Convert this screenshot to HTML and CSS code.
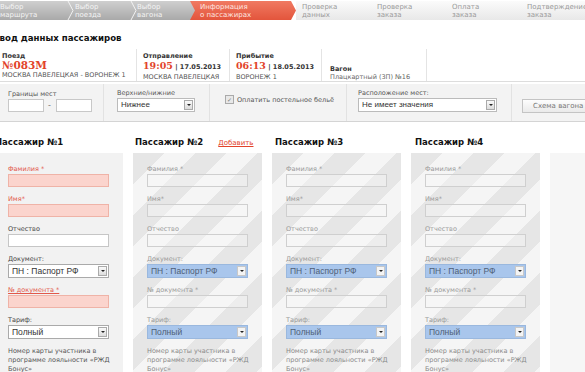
FILE: index.html
```html
<!DOCTYPE html>
<html lang="ru">
<head>
  <meta charset="UTF-8" />
  <title>Информация о пассажирах</title>
  <link rel="stylesheet" href="styles.css">
</head>
<body>
  <div class="steps">
    <div class="step done">Выбор<br>маршрута</div>
    <svg class="chev" width="7" height="19" viewBox="0 0 7 19"><polyline points="1,0 6,9.5 1,19" fill="none" stroke="#f2f2f2" stroke-width="1"/></svg>
    <div class="step done">Выбор<br>поезда</div>
    <svg class="chev" width="7" height="19" viewBox="0 0 7 19"><polyline points="1,0 6,9.5 1,19" fill="none" stroke="#f2f2f2" stroke-width="1"/></svg>
    <div class="step done">Выбор<br>вагона</div>
    <div class="step active">Информация<br>о пассажирах</div>
    <div class="step todo">Проверка<br>данных</div>
    <div class="step todo">Проверка<br>заказа</div>
    <div class="step todo">Оплата<br>заказа</div>
    <div class="step todo">Подтверждение<br>заказа</div>
  </div>

  <h1 class="title">Ввод данных пассажиров</h1>

  <div class="trip">
    <div class="trip-col c1">
      <div class="lbl">Поезд</div>
      <div class="big">№083М</div>
      <div class="sub">МОСКВА ПАВЕЛЕЦКАЯ - ВОРОНЕЖ 1</div>
    </div>
    <div class="trip-col c2">
      <div class="lbl">Отправление</div>
      <div class="time"><span class="red">19:05</span> | 17.05.2013</div>
      <div class="sub">МОСКВА ПАВЕЛЕЦКАЯ</div>
    </div>
    <div class="trip-col c3">
      <div class="lbl">Прибытие</div>
      <div class="time"><span class="red">06:13</span> | 18.05.2013</div>
      <div class="sub">ВОРОНЕЖ 1</div>
    </div>
    <div class="trip-col c4">
      <div class="lbl">Вагон</div>
      <div class="sub plain">Плацкартный (3П) №16</div>
    </div>
    <div class="trip-col c5"></div>
  </div>

  <div class="filters">
    <div class="fgroup g1">
      <div class="flabel">Границы мест</div>
      <div class="range"><input class="box" type="text"> <span class="dash">-</span> <input class="box" type="text"></div>
    </div>
    <div class="fgroup g2">
      <div class="flabel">Верхние/нижние</div>
      <div class="select w78">Нижнее<span class="arr"></span></div>
    </div>
    <div class="fgroup g3">
      <label class="check"><span class="cb">✓</span> Оплатить постельное бельё</label>
    </div>
    <div class="fgroup g4">
      <div class="flabel">Расположение мест:</div>
      <div class="select w139">Не имеет значения<span class="arr"></span></div>
    </div>
    <div class="fgroup g5">
      <button class="scheme">Схема вагона</button>
    </div>
  </div>

  <div class="pass-heads">
    <div class="phead">Пассажир №1</div>
    <div class="phead">Пассажир №2 <a class="add" href="#">Добавить</a></div>
    <div class="phead">Пассажир №3</div>
    <div class="phead">Пассажир №4</div>
  </div>

  <div class="cards">
    <div class="card active-card">
      <div class="flbl req">Фамилия *</div>
      <input class="inp err" type="text">
      <div class="flbl req">Имя*</div>
      <input class="inp err" type="text">
      <div class="flbl">Отчество</div>
      <input class="inp" type="text">
      <div class="flbl">Документ:</div>
      <div class="select fsel">ПН : Паспорт РФ<span class="arr"></span></div>
      <div class="flbl req ul">№ документа *</div>
      <input class="inp err" type="text">
      <div class="flbl">Тариф:</div>
      <div class="select fsel">Полный<span class="arr"></span></div>
      <div class="note">Номер карты участника в программе лояльности «РЖД Бонус»</div>
    </div>
    <div class="card off">
      <div class="flbl">Фамилия *</div>
      <input class="inp" type="text">
      <div class="flbl">Имя*</div>
      <input class="inp" type="text">
      <div class="flbl">Отчество</div>
      <input class="inp" type="text">
      <div class="flbl">Документ:</div>
      <div class="select fsel blue">ПН : Паспорт РФ<span class="arr"></span></div>
      <div class="flbl">№ документа *</div>
      <input class="inp" type="text">
      <div class="flbl">Тариф:</div>
      <div class="select fsel blue">Полный<span class="arr"></span></div>
      <div class="note">Номер карты участника в программе лояльности «РЖД Бонус»</div>
    </div>
    <div class="card off">
      <div class="flbl">Фамилия *</div>
      <input class="inp" type="text">
      <div class="flbl">Имя*</div>
      <input class="inp" type="text">
      <div class="flbl">Отчество</div>
      <input class="inp" type="text">
      <div class="flbl">Документ:</div>
      <div class="select fsel blue">ПН : Паспорт РФ<span class="arr"></span></div>
      <div class="flbl">№ документа *</div>
      <input class="inp" type="text">
      <div class="flbl">Тариф:</div>
      <div class="select fsel blue">Полный<span class="arr"></span></div>
      <div class="note">Номер карты участника в программе лояльности «РЖД Бонус»</div>
    </div>
    <div class="card off">
      <div class="flbl">Фамилия *</div>
      <input class="inp" type="text">
      <div class="flbl">Имя*</div>
      <input class="inp" type="text">
      <div class="flbl">Отчество</div>
      <input class="inp" type="text">
      <div class="flbl">Документ:</div>
      <div class="select fsel blue">ПН : Паспорт РФ<span class="arr"></span></div>
      <div class="flbl">№ документа *</div>
      <input class="inp" type="text">
      <div class="flbl">Тариф:</div>
      <div class="select fsel blue">Полный<span class="arr"></span></div>
      <div class="note">Номер карты участника в программе лояльности «РЖД Бонус»</div>
    </div>
    <div class="card empty"></div>
  </div>
</body>
</html>
```

FILE: styles.css
```css
body {
  margin: 0;
  width: 585px;
  height: 372px;
  overflow: hidden;
  background: #fff;
  font-family: "DejaVu Sans", Verdana, sans-serif;
  color: #333;
}

/* steps bar */
.steps {
  display: flex;
  margin-top: 1px;
  height: 19px;
  width: 700px;
}

.step {
  font-size: 7px;
  line-height: 8px;
  padding-top: 2px;
  box-sizing: border-box;
  height: 19px;
  white-space: nowrap;
  flex: none;
}

.step.done {
  background: linear-gradient(#cfcfcf, #a9a9a9);
  color: #f4f4f4;
  padding-left: 4px;
}

.step.done:nth-child(1) { width: 71px; margin-left: -4px; }
.step.done:nth-child(3) { width: 56px; padding-left: 1px; }
.step.done:nth-child(5) { width: 58px; padding-left: 0; }

.chev {
  display: block;
  flex: none;
  background: linear-gradient(#cfcfcf, #a9a9a9);
}

.step.active {
  width: 106px;
  background: linear-gradient(#f07a62, #e3553c);
  color: #fde8e2;
  padding-left: 10px;
  clip-path: polygon(0 0, calc(100% - 5px) 0, 100% 50%, calc(100% - 5px) 100%, 0 100%, 5px 50%);
  margin-left: -5px;
}

.step.todo {
  width: 75px;
  background: linear-gradient(#fbfbfb, #e8e8e8);
  color: #9a9a9a;
  padding-left: 6px;
}

/* title */
.title {
  font-size: 8.6px;
  font-weight: bold;
  color: #111;
  margin: 12px 0 0 -7px;
  height: 13px;
  line-height: 13px;
}

/* trip info */
.trip {
  display: flex;
  margin-top: 4px;
  height: 32px;
  border-bottom: 1px solid #ddd;
  width: 700px;
}

.trip-col {
  border-right: 1px solid #e4e4e4;
  box-sizing: border-box;
  padding-left: 6px;
  padding-top: 3px;
  white-space: nowrap;
  flex: none;
}

.c1 { width: 137px; padding-left: 2px; }
.c2 { width: 93px; }
.c3 { width: 92px; }
.c4 { width: 105px; padding-left: 8px; padding-top: 16px; }
.c5 { border-right: none; flex: 1; }

.lbl {
  font-size: 6.5px;
  font-weight: bold;
  color: #333;
  line-height: 8px;
}

.big {
  font-family: "DejaVu Serif", serif;
  font-weight: bold;
  font-size: 10.5px;
  color: #e2432a;
  line-height: 11px;
}

.time {
  font-size: 6.5px;
  font-weight: bold;
  color: #333;
  line-height: 11px;
}

.time .red {
  font-family: "DejaVu Serif", serif;
  font-size: 9.5px;
  color: #e2432a;
}

.sub {
  font-size: 6.5px;
  color: #555;
  line-height: 8px;
}

.sub.plain { color: #666; }

/* filters */
.filters {
  display: flex;
  height: 37px;
  margin-top: 2px;
  background: #f3f3f3;
  border-bottom: 1px solid #d4d4d4;
  width: 700px;
}

.fgroup {
  box-sizing: border-box;
  border-right: 1px solid #e2e2e2;
  padding-top: 6px;
  flex: none;
}

.g1 { width: 104px; padding-left: 8px; }
.g2 { width: 106px; padding-left: 13px; padding-top: 5px; }
.g3 { width: 137px; padding-left: 15px; padding-top: 11px; }
.g4 { width: 165px; padding-left: 11px; padding-top: 5px; }
.g5 { border-right: none; padding-left: 10px; padding-top: 9px; }

.flabel {
  font-size: 6.5px;
  color: #555;
  line-height: 9px;
}

.range {
  display: flex;
  align-items: center;
  gap: 4px;
}

.box {
  width: 36px;
  height: 13px;
  box-sizing: border-box;
  border: 1px solid #c8c8c8;
  background: #fff;
  margin: 0;
  padding: 0;
}

.dash {
  font-size: 8px;
  color: #777;
  width: 4px;
}

.select {
  position: relative;
  box-sizing: border-box;
  height: 14px;
  border: 1px solid #bbb;
  background: #fff;
  font-family: "Liberation Sans", Arial, sans-serif;
  font-size: 8px;
  line-height: 12px;
  padding-left: 3px;
  color: #333;
}

.w78 { width: 78px; }
.w139 { width: 139px; }

.arr {
  position: absolute;
  right: 1px;
  top: 1px;
  width: 9px;
  height: 10px;
  box-sizing: border-box;
  border: 1px solid #aaa;
  background: linear-gradient(#fafafa, #dcdcdc);
}

.arr::after {
  content: "";
  position: absolute;
  left: 2px;
  top: 3px;
  border-left: 2px solid transparent;
  border-right: 2px solid transparent;
  border-top: 2px solid #222;
}

.check {
  display: flex;
  align-items: center;
  gap: 3px;
  font-size: 6.5px;
  color: #555;
  white-space: nowrap;
}

.cb {
  width: 7px;
  height: 7px;
  border: 1px solid #aaa;
  background: #e8e8e8;
  font-size: 6px;
  line-height: 7px;
  text-align: center;
  color: #777;
}

.scheme {
  font-family: "DejaVu Sans", sans-serif;
  font-size: 7px;
  color: #777;
  background: linear-gradient(#fdfdfd, #eaeaea);
  border: 1px solid #c4c4c4;
  padding: 1px 10px;
  height: 14px;
  white-space: nowrap;
}

/* passengers */
.pass-heads {
  display: flex;
  margin-left: -6px;
  margin-top: 13px;
  height: 14px;
  gap: 10px;
}

.phead {
  width: 129px;
  flex: none;
  font-size: 8.5px;
  font-weight: bold;
  color: #111;
  line-height: 14px;
  white-space: nowrap;
  padding-left: 1px;
}

.add {
  font-size: 7px;
  font-weight: normal;
  color: #e2432a;
  margin-left: 12px;
}

.cards {
  display: flex;
  gap: 10px;
  margin-left: -6px;
  margin-top: 4px;
  width: 800px;
}

.card {
  width: 129px;
  flex: none;
  height: 240px;
  box-sizing: border-box;
  padding: 11px 14px 0;
  display: flex;
  flex-direction: column;
  background: #f2f2f2;
}

.card.off {
  background: repeating-linear-gradient(135deg, #e6e6e6 0 22px, #f5f5f5 22px 44px);
}

.card.empty {
  background: #f6f6f6;
  width: 60px;
}

.flbl {
  font-size: 6.5px;
  line-height: 10px;
  color: #999;
}

.active-card .flbl { color: #444; }
.active-card .flbl.req { color: #e2584a; }
.flbl.ul { text-decoration: underline; }

.inp {
  display: block;
  width: 101px;
  height: 13px;
  box-sizing: border-box;
  border: 1px solid #c6c6c6;
  background: #fff;
  margin: 0 0 7px;
  padding: 0;
}

.card.off .inp {
  background: rgba(250, 250, 250, 0.35);
  border-color: #cfcfcf;
}

.inp.err {
  background: #fbd4cd;
  border-color: #efb3a7;
}

.fsel {
  width: 101px;
  margin-bottom: 7px;
  border-color: #aaa;
  font-size: 8.5px;
}

.fsel.blue {
  background: #a9c6ec;
  border-color: #9ab8de;
  color: #4f5f76;
}

.fsel.blue .arr {
  border-color: #c8c8c8;
  background: #f4f4f4;
}

.note {
  font-size: 6.5px;
  line-height: 9px;
  color: #555;
  margin-top: 1px;
  margin-right: -8px;
}

.card.off .note { color: #8a8a8a; }
```
